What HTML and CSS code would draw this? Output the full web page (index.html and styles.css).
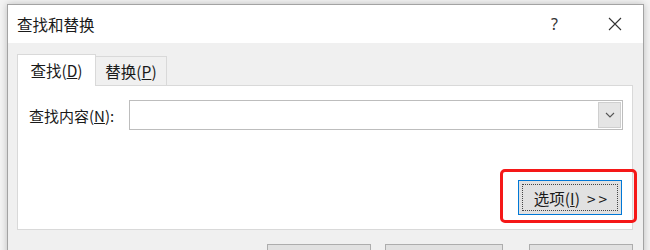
FILE: index.html
```html
<!DOCTYPE html>
<html lang="zh-CN">
<head>
<meta charset="utf-8">
<title>查找和替换</title>
<link rel="stylesheet" href="styles.css">
</head>
<body>
<div class="window">
  <div class="titlebar">
    <span class="title">查找和替换</span>
    <span class="help">?</span>
    <span class="close">
      <svg width="14" height="14" viewBox="0 0 14 14"><path d="M1 1L13 13M13 1L1 13" stroke="#333" stroke-width="1.1" fill="none"/></svg>
    </span>
  </div>
  <div class="content">
    <div class="tabs">
      <div class="tab active">查找(<u>D</u>)</div>
      <div class="tab">替换(<u>P</u>)</div>
    </div>
    <div class="panel">
      <div class="row">
        <span class="label">查找内容(<u>N</u>):</span>
        <div class="combo">
          <div class="combo-btn">
            <svg width="10" height="6" viewBox="0 0 10 6"><path d="M1 1L5 5L9 1" stroke="#555" stroke-width="1.1" fill="none"/></svg>
          </div>
        </div>
      </div>
      <div class="options-row">
        <div class="options-wrap">
          <button class="btn options"><span class="focus">选项(<u>I</u>)<span class="arrows">&gt;&gt;</span></span></button>
          <div class="highlight"></div>
        </div>
      </div>
    </div>
    <div class="footer">
      <button class="btn wide"></button>
      <button class="btn wider"></button>
      <button class="btn wide"></button>
    </div>
  </div>
</div>
</body>
</html>
```
FILE: styles.css
```css
* { box-sizing: border-box; }
html, body { margin: 0; height: 100%; }
body {
  background: #f3f3f3;
  padding: 4px 0 0 7px;
  overflow: hidden;
  font-family: "Noto Sans CJK SC", "Noto Sans", sans-serif;
  color: #1a1a1a;
}
.window {
  width: 637px;
  border: 1px solid #a3a3a3;
  border-bottom: none;
  box-shadow: 0 0 7px rgba(0,0,0,0.22);
  background: #f0f0f0;
  height: 260px;
}
.titlebar {
  height: 38px;
  background: #fff;
  display: flex;
  align-items: center;
  padding-left: 9px;
  font-size: 15.5px;
}
.title { flex: 1; }
.help {
  font-family: "Segoe UI", "Noto Sans", sans-serif;
  font-size: 16px;
  color: #333;
  margin-right: 50px;
}
.close {
  display: flex;
  margin-right: 21px;
}
.content {
  padding: 11px 10px 0 9px;
}
.tabs {
  display: flex;
  align-items: flex-end;
  position: relative;
  z-index: 1;
  margin-bottom: -1px;
  font-size: 15.5px;
}
.tab {
  display: flex;
  align-items: center;
  justify-content: center;
  border: 1px solid #d9d9d9;
  border-bottom: none;
}
.tab.active {
  width: 79px;
  height: 32px;
  background: #fff;
  padding-bottom: 2px;
}
.tab:not(.active) {
  width: 71px;
  height: 29px;
  border-left: none;
  margin-bottom: 1px;
  background: #f0f0f0;
}
.panel {
  height: 145px;
  background: #fff;
  border: 1px solid #d9d9d9;
  padding: 14px 9px 0 11px;
}
.row {
  display: flex;
  align-items: center;
  font-size: 15px;
}
.label { width: 100px; }
.combo {
  flex: 1;
  height: 30px;
  border: 1px solid #bdbdbd;
  display: flex;
  justify-content: flex-end;
  padding: 1px;
}
.combo-btn {
  width: 23px;
  background: #e5e5e5;
  border: 1px solid #cfcfcf;
  display: flex;
  align-items: center;
  justify-content: center;
}
.options-row {
  display: flex;
  justify-content: flex-end;
  margin-top: 50px;
  padding-right: 1px;
}
.options-wrap { position: relative; }
.btn {
  font-family: inherit;
  background: #e1e1e1;
  border: 1px solid #adadad;
  padding: 0;
  margin: 0;
}
.options {
  width: 104px;
  height: 35px;
  border-color: #0078d7;
  padding: 3px;
  font-size: 15.5px;
  color: #1a1a1a;
  display: flex;
}
.focus {
  flex: 1;
  border: 1px dotted #444;
  display: flex;
  align-items: center;
  justify-content: center;
  padding-left: 1px;
}
.arrows {
  margin-left: 7px;
  letter-spacing: 3px;
  margin-right: -3px;
}
.highlight {
  position: absolute;
  top: -11px;
  left: -18px;
  right: -15px;
  bottom: -8px;
  border: 3px solid #f51818;
  border-radius: 5px;
}
.footer {
  display: flex;
  justify-content: flex-end;
  gap: 14px;
  margin-top: 14px;
  padding-right: 0;
}
.footer .btn { height: 30px; }
.wide { width: 104px; }
.wider { width: 118px; margin-right: 12px; }
```
